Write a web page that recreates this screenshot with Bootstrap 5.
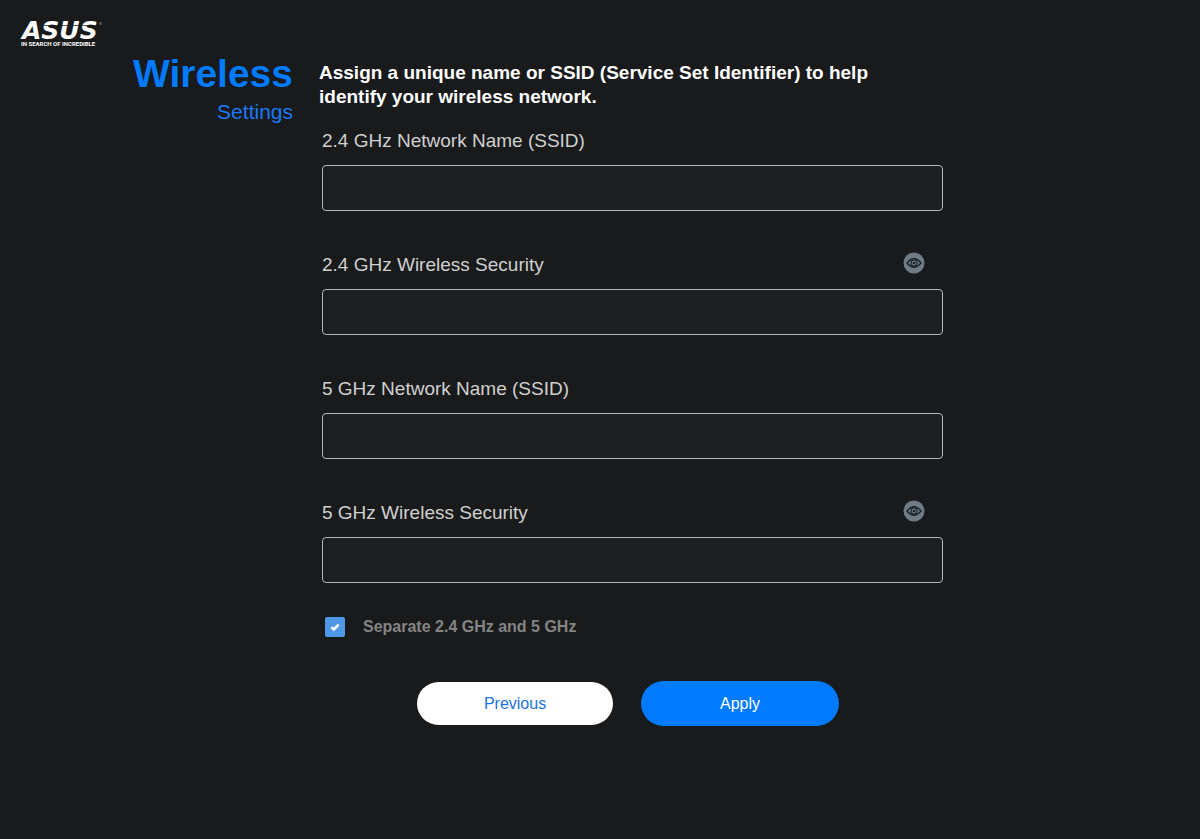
<!DOCTYPE html>
<html lang="en">
<head>
<meta charset="utf-8">
<meta name="viewport" content="width=device-width, initial-scale=1">
<title>ASUS Wireless Settings</title>
<link href="https://cdn.jsdelivr.net/npm/bootstrap@5.3.0/dist/css/bootstrap.min.css" rel="stylesheet">
<style>
  body {
    font-family: "Liberation Sans", Arial, sans-serif;
    background: #18191a repeating-conic-gradient(#161819 0% 25%, #1a1c1d 0% 50%) 0 0 / 4px 4px;
    color: #d0d0d0;
    min-height: 100vh;
  }
  .brand { padding: 10px 20px 0; height: 52px; }
  .brand svg { display: block; }
  .wizard { display: grid; grid-template-columns: minmax(0, 293fr) minmax(0, 881fr); column-gap: 26px; }
  .page-title { font-size: 39px; line-height: 44px; font-weight: 700; color: #007aff; }
  .page-sub { font-size: 21px; line-height: 32px; color: #1a7af5; }
  .setup { max-width: 624px; margin-right: 20px; }
  .intro { font-size: 19px; line-height: 24px; font-weight: 700; color: #fff; padding-top: 9px; margin-bottom: 18px; max-width: 580px; }
  .fields { padding-left: 3px; }
  .field-head { height: 28px; margin-bottom: 10px; padding-right: 18px; }
  .field-head label { font-size: 19px; line-height: 28px; }
  .field { margin-bottom: 40px; }
  .field .form-control, .field .form-control:focus {
    height: 46px; background: #1d1e20; border: 1px solid #b4b6b7; border-radius: 4px; color: #d0d0d0; font-size: 19px;
  }
  .eye { width: 22px; height: 22px; }
  .eye svg { display: block; }
  .split { gap: 18px; padding-left: 3px; margin-top: -8px; }
  .split .form-check-input {
    width: 20px; height: 20px; border-radius: 2px; margin: 0; border: 0; background-color: #4f98e8; background-size: 16px 16px;
  }
  .split .form-check-input:checked {
    background-image: url("data:image/svg+xml,%3Csvg xmlns='http://www.w3.org/2000/svg' viewBox='0 0 16 16'%3E%3Cpath fill='none' stroke='%23fff' stroke-width='2.6' d='M4.5 8.3l2.4 2.2 4.7-4.8'/%3E%3C/svg%3E");
  }
  .split label { font-size: 16px; line-height: 24px; font-weight: 700; color: #858585; }
  .actions { gap: 28px; padding-top: 42px; padding-right: 6px; }
  .actions .btn { font-size: 16px; border: 0; }
  .btn-prev, .btn-prev:hover { width: 196px; height: 43px; background: #fff; color: #1a73e0; }
  .btn-apply, .btn-apply:hover { width: 198px; height: 45px; background: #007aff; color: #fff; }
</style>
</head>
<body>
<header class="brand">
  <svg width="84" height="42" viewBox="0 0 84 42" role="img" aria-label="ASUS In Search of Incredible">
    <text x="2" y="29" font-family="DejaVu Sans, sans-serif" font-weight="700" font-style="italic" font-size="25" fill="#fff">ASUS</text>
    <path d="M22 15.500H78" stroke="#18191a" stroke-width=".7"/>
    <circle cx="80.500" cy="13.500" r="1" fill="none" stroke="#aaa" stroke-width=".6"/>
    <text x="1" y="36" font-family="Roboto, sans-serif" font-weight="700" font-size="6" fill="#fff">IN SEARCH OF INCREDIBLE</text>
  </svg>
</header>
<main class="wizard">
  <div class="text-end">
    <h1 class="page-title mb-0">Wireless</h1>
    <p class="page-sub mb-0">Settings</p>
  </div>
  <form class="setup">
    <p class="intro">Assign a unique name or SSID (Service Set Identifier) to help identify your wireless network.</p>
    <div class="fields">
      <div class="field">
        <div class="field-head"><label for="ssid24">2.4 GHz Network Name (SSID)</label></div>
        <input class="form-control" id="ssid24" type="text">
      </div>
      <div class="field">
        <div class="field-head d-flex justify-content-between align-items-center">
          <label for="key24">2.4 GHz Wireless Security</label>
          <button type="button" class="eye btn p-0 border-0 mb-1" aria-label="Show 2.4 GHz password">
            <svg width="22" height="22" viewBox="0 0 22 22"><circle cx="11" cy="11" r="10.500" fill="#707b85"/><path d="M4 11Q11 2.500 18 11Q11 19.500 4 11Z" fill="#707b85" stroke="#182029" stroke-width="1.300"/><circle cx="11" cy="11" r="3" fill="#707b85" stroke="#182029" stroke-width="1.100"/><circle cx="11" cy="11" r="1.300" fill="#182029"/></svg>
          </button>
        </div>
        <input class="form-control" id="key24" type="password">
      </div>
      <div class="field">
        <div class="field-head"><label for="ssid5">5 GHz Network Name (SSID)</label></div>
        <input class="form-control" id="ssid5" type="text">
      </div>
      <div class="field">
        <div class="field-head d-flex justify-content-between align-items-center">
          <label for="key5">5 GHz Wireless Security</label>
          <button type="button" class="eye btn p-0 border-0 mb-1" aria-label="Show 5 GHz password">
            <svg width="22" height="22" viewBox="0 0 22 22"><circle cx="11" cy="11" r="10.500" fill="#707b85"/><path d="M4 11Q11 2.500 18 11Q11 19.500 4 11Z" fill="#707b85" stroke="#182029" stroke-width="1.300"/><circle cx="11" cy="11" r="3" fill="#707b85" stroke="#182029" stroke-width="1.100"/><circle cx="11" cy="11" r="1.300" fill="#182029"/></svg>
          </button>
        </div>
        <input class="form-control" id="key5" type="password">
      </div>
      <div class="split d-flex align-items-center">
        <input class="form-check-input" id="separate" type="checkbox" checked>
        <label for="separate">Separate 2.4 GHz and 5 GHz</label>
      </div>
    </div>
    <div class="actions d-flex justify-content-center align-items-center">
      <button type="button" class="btn btn-prev rounded-pill">Previous</button>
      <button type="submit" class="btn btn-apply rounded-pill">Apply</button>
    </div>
  </form>
</main>
<script src="https://cdn.jsdelivr.net/npm/bootstrap@5.3.0/dist/js/bootstrap.bundle.min.js"></script>
</body>
</html>
